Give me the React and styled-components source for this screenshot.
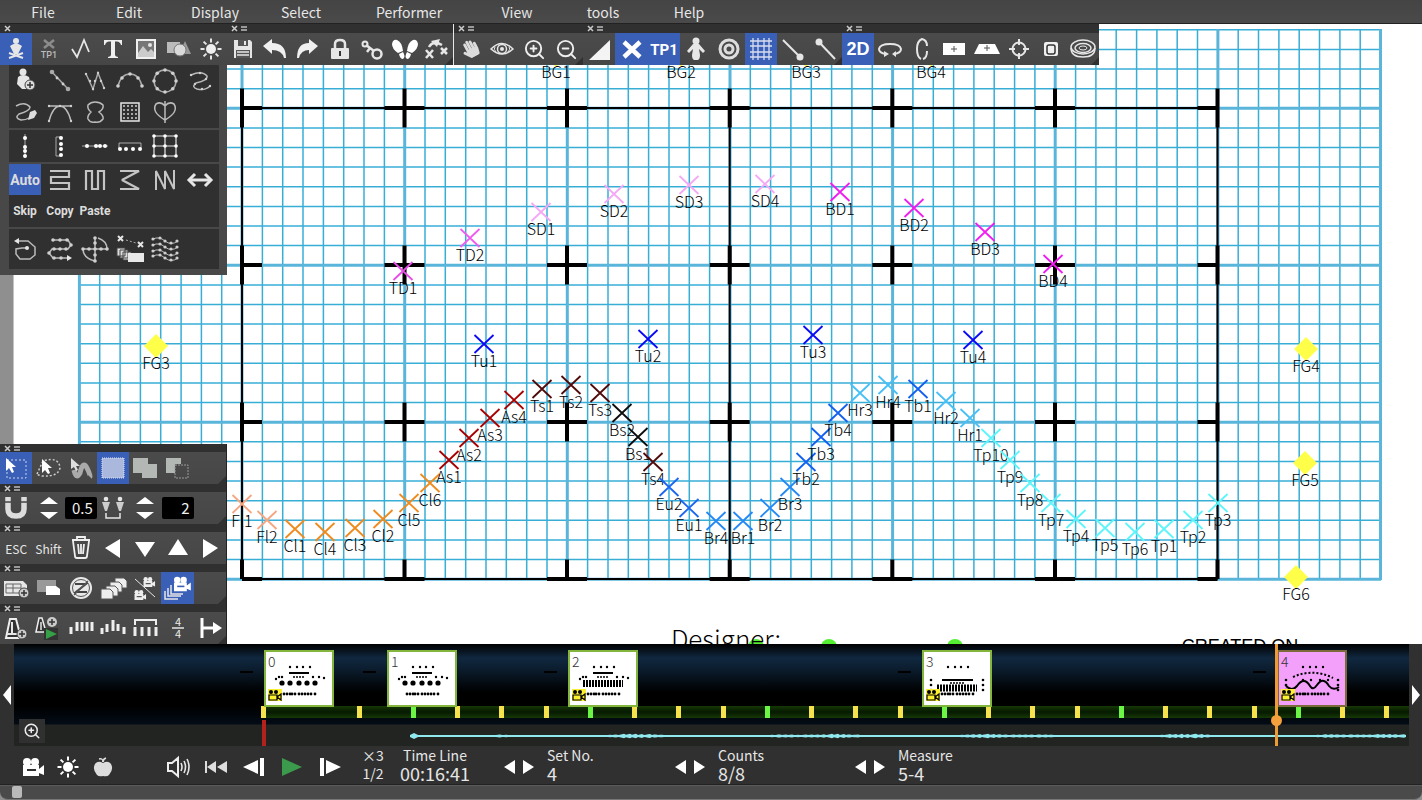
import React from "react";
import styled, { createGlobalStyle, css } from "styled-components";
import { ZoomIn, ZoomOut } from "lucide-react";
import { FaHandPaper } from "react-icons/fa";

const c = {
  panel: "#484848",
  dark: "#303030",
  blue: "#3a5fb7",
  ink: "#e6e6e6",
  dim: "#bdbdbd",
  grid: "#38aed7",
  gridMajor: "#5ab5da",
};
const sans = `"Noto Sans CJK JP", "Noto Sans", sans-serif`;

const GlobalStyle = createGlobalStyle`
  *, *::before, *::after { box-sizing: border-box; }
  body { margin: 0; background: #8f8f8f; font-family: ${sans}; color: ${c.ink}; }
  button, input { font-family: inherit; }
`;

/* ---------- layout ---------- */

const Shell = styled.div`
  display: flex;
  flex-direction: column;
  min-height: 100vh;
  overflow: hidden;
`;

const MenuBar = styled.nav`
  display: flex;
  height: 24px;
  background: linear-gradient(#444, #4a4a4a);
  border-bottom: 1px solid #222;
`;

const MenuItem = styled.button`
  width: ${(p) => (p.$wide ? 130 : 86)}px;
  padding: 0;
  border: 0;
  background: none;
  color: ${c.ink};
  font-size: 14px;
  line-height: 24px;
`;

const Workspace = styled.main`
  position: relative;
  flex: 1 0 620px;
  overflow: hidden;
  background: #fff;
`;

const Ruler = styled.div`
  position: absolute;
  inset: 0 auto 0 0;
  width: 14px;
  background: #8f8f8f;
  border-right: 1px solid #c4c4c4;
`;

const FieldSvg = styled.svg`
  position: absolute;
  top: 0;
  left: 0;
  width: 1422px;
  height: 620px;
  text {
    font-family: ${sans};
    font-weight: 300;
    font-size: 16px;
    text-anchor: middle;
    fill: #000;
  }
  text.designer { font-size: 26px; }
  text.stamp { font-family: "Liberation Sans", sans-serif; font-weight: 400; font-size: 18px; }
`;

const TopDock = styled.div`
  position: absolute;
  top: 0;
  left: 0;
  display: flex;
`;

const SideDock = styled.div`
  position: absolute;
  top: 41px;
  left: 0;
  width: 227px;
`;

const BottomDock = styled.div`
  position: absolute;
  bottom: 0;
  left: 0;
  width: 227px;
  border-right: 1px solid #222;
`;

const Toolbar = styled.section`
  width: ${(p) => (p.$width ? `${p.$width}px` : "auto")};
  background: ${c.panel};
  ${(p) => p.$ruled && css`border-left: 1px solid #e8e8e8;`}
`;

const Handle = styled.header`
  display: flex;
  gap: 5px;
  height: ${(p) => p.$height}px;
  padding-left: 4px;
  background: ${c.dark};
  svg { display: block; height: 8px; }
`;

const Tools = styled.div`
  position: relative;
  display: flex;
  height: 32px;
  background: linear-gradient(#4b4b4b, #464646);
  &::after {
    content: "";
    position: absolute;
    right: 0;
    bottom: 0;
    border: 4px solid;
    border-color: transparent ${c.dark} ${c.dark} transparent;
    display: ${(p) => (p.$grip ? "block" : "none")};
  }
`;

const ToolButton = styled.button`
  display: flex;
  flex: 1 1 0;
  align-items: center;
  justify-content: center;
  min-width: 0;
  height: 100%;
  padding: 0;
  border: 0;
  color: ${c.ink};
  font-size: 12px;
  background: ${(p) => (p.$on ? c.blue : "none")};
`;

const Glyph = styled.svg`
  flex: none;
  width: 32px;
  height: 32px;
  overflow: visible;
  fill: none;
  stroke: none;
`;

const Stepper = styled.div`
  display: flex;
  flex: 1 1 0;
  flex-direction: column;
  align-items: center;
  justify-content: center;
`;

const StepButton = styled.button`
  display: flex;
  justify-content: center;
  width: 20px;
  height: 12px;
  padding: 0;
  border: 0;
  background: none;
`;

const NumberBox = styled.input`
  flex: none;
  align-self: center;
  width: 32px;
  height: 22px;
  padding: 0 4px 0 0;
  border: 0;
  border-radius: 2px;
  background: #000;
  color: #f0f0f0;
  font-size: 15px;
  line-height: 22px;
  text-align: right;
`;

const Palette = styled.section`
  display: flex;
  flex-direction: column;
  gap: 2px;
  height: 210px;
  padding: 0 8px 6px 9px;
  background: ${c.panel};
`;

const PaletteGroup = styled.div`
  display: grid;
  grid-template-columns: repeat(6, 35px);
  grid-auto-rows: 31px;
  align-content: ${(p) => (p.$center ? "center" : "start")};
  height: ${(p) => p.$height}px;
  background: ${c.dark};
  overflow: hidden;
  ${ToolButton} { width: 32px; }
`;

/* ---------- timeline ---------- */

const Timeline = styled.section`
  display: flex;
  height: 102px;
  background: ${c.dark};
`;

const PageButton = styled.button`
  display: flex;
  align-items: center;
  justify-content: center;
  width: ${(p) => p.$width}px;
  padding: 0;
  border: 0;
  background: none;
`;

const Track = styled.div`
  position: relative;
  flex: 1;
  overflow: hidden;
  background: linear-gradient(#000 0, #10283f 14px, #0c1e30 24px, #000 48px, #000 62px, #030c16 80px, #222422 81px);
`;

const BeatStrip = styled.div`
  position: absolute;
  top: 62px;
  left: 249px;
  right: 0;
  height: 12px;
  background: linear-gradient(#163806, #061a00, #163806);
`;

const Beat = styled.span`
  position: absolute;
  top: 62px;
  width: 5px;
  height: 12px;
  background: ${(p) => (p.$green ? "#6cf545" : "#f7e14c")};
`;

const Dash = styled.span`
  position: absolute;
  top: 27px;
  width: 13px;
  height: 2px;
  background: #000;
`;

const SetCard = styled.button`
  position: absolute;
  top: 6px;
  width: 70px;
  height: 57px;
  padding: 0;
  border: 2px solid ${(p) => (p.$current ? "#7d6a3c" : "#84b53c")};
  background: ${(p) => (p.$current ? "#f2a0fa" : "#fff")};
  svg { display: block; }
  text { font: 300 14px ${sans}; fill: #333; }
`;

const Wave = styled.svg`
  position: absolute;
  left: 396px;
  top: 84px;
  width: 1000px;
  height: 16px;
`;

const StartMark = styled.span`
  position: absolute;
  left: 248px;
  top: 76px;
  width: 4px;
  height: 26px;
  background: #b3211c;
`;

const ZoomButton = styled.button`
  position: absolute;
  left: 5px;
  top: 75px;
  display: flex;
  align-items: center;
  justify-content: center;
  width: 26px;
  height: 24px;
  padding: 0;
  border: 0;
  background: ${c.dark};
`;

const Playhead = styled.span`
  position: absolute;
  left: 1261px;
  top: 0;
  width: 3px;
  height: 102px;
  background: #f09a36;
  &::after {
    content: "";
    position: absolute;
    left: -4px;
    top: 71px;
    width: 11px;
    height: 11px;
    border-radius: 50%;
    background: #f4a03c;
  }
`;

/* ---------- transport ---------- */

const Transport = styled.footer`
  display: flex;
  align-items: center;
  height: 39px;
  padding-left: 15px;
  background: ${c.dark};
  border-bottom: 1px solid #222;
`;

const Cluster = styled.div`
  display: flex;
  padding-top: 3px;
  margin-right: ${(p) => p.$after || 0}px;
`;

const PlayButton = styled.button`
  display: flex;
  align-items: center;
  justify-content: center;
  width: ${(p) => p.$width}px;
  height: 32px;
  padding: 0;
  border: 0;
  background: none;
`;

const Readout = styled.div`
  display: flex;
  flex-direction: column;
  width: ${(p) => p.$width}px;
  margin-right: ${(p) => p.$after || 0}px;
  padding-bottom: 2px;
  text-align: ${(p) => (p.$center ? "center" : "left")};
`;

const Caption = styled.span`
  font-size: 14px;
  line-height: 18px;
`;

const Value = styled.span`
  font-size: 18px;
  line-height: 18px;
`;

const Counter = styled.div`
  display: flex;
  align-items: center;
  gap: 9px;
  width: ${(p) => p.$width}px;
`;

const ScrollTrack = styled.div`
  height: 15px;
  padding-left: 12px;
  background: #4a4a4a;
  border-top: 1px solid #5a5a5a;
  border-bottom: 1px solid #777;
  border-radius: 0 0 8px 8px;
`;

const ScrollThumb = styled.div`
  width: 10px;
  height: 12px;
  border-radius: 2px;
  background: #b9b9b9;
`;

/* ---------- icons, drawn around 0,0 ---------- */

const G = ({ children }) => (
  <Glyph viewBox="-16 -16 32 32" aria-hidden="true">{children}</Glyph>
);
const L = ({ d, w = 1.5, s = c.ink, ...r }) => <path d={d} stroke={s} strokeWidth={w} {...r} />;
const F = ({ d, f = c.ink, ...r }) => <path d={d} fill={f} {...r} />;
const O = ({ x = 0, y = 0, r = 1.5, f = c.ink }) => <circle cx={x} cy={y} r={r} fill={f} />;
const Dots = ({ at, r = 1.4, f = "#cfcfcf" }) => at.map(([x, y], i) => <O key={i} x={x} y={y} r={r} f={f} />);

const rays = Array.from({ length: 8 }, (_, i) => {
  const a = (i * Math.PI) / 4;
  const p = (r) => `${(Math.cos(a) * r).toFixed(1)} ${(Math.sin(a) * r).toFixed(1)}`;
  return `M${p(6.5)}L${p(10.5)}`;
}).join("");
const ring = Array.from({ length: 8 }, (_, i) => [
  Math.cos((i * Math.PI) / 4) * 11,
  Math.sin((i * Math.PI) / 4) * 11,
]);

const CameraShape = ({ f = "#fff", hole = c.dark }) => (
  <>
    <O x={-6} y={-5} r={4} f={f} />
    <O x={2} y={-5} r={4} f={f} />
    <F f={f} d="M-10-2H6V9H-10zM6 2l5-4V8L6 6z" />
    <F f={hole} d="M-6 2H3V4H-6z" />
  </>
);

const I = {
  performer: <G><L d="M-7 4L7 9M7 4L-7 9" w={2} /><O y={-8} r={3} /><F d="M-6-3Q0-8 6-3L2 5H-2z" /></G>,
  labelOff: <G><L d="M-5-9L5-1M5-9L-5-1" w={2.5} s="#8c8c8c" /><text y="9" textAnchor="middle" fontSize="9" fontWeight="500" fill="#bbb" fontFamily="Roboto, sans-serif">TP1</text></G>,
  poly: <G><L d="M-9 0L-4 8L3-9L8 3" w={1.8} /></G>,
  text: <G><F d="M-9-9H9V-4H8Q7-7.500 4-7.500H2V6Q2 7.500 5 8V9H-5V8Q-2 7.500-2 6V-7.500H-4Q-7-7.500-8-4H-9z" f="#f0f0f0" /></G>,
  image: <G><path d="M-9-9H9V9H-9z" fill="#777" stroke="#f0f0f0" strokeWidth="2" /><F d="M-8 8V4L-3-3L2 3L5 0L8 3V8z" f="#ccc" /><O x={4} y={-4} r={2} /></G>,
  shapes: <G><F d="M-11-7H2V4H-11z" f="#bbb" /><F d="M7-8L13 5H1z" f="#999" /><circle cx="2" cy="1" r="6" fill="#dadada" stroke="#777" /></G>,
  sun: <G><O r={5} f="#eee" /><L d={rays} w={2} /></G>,
  save: <G><F d="M-9-9H7L9-7V9H-9z" /><F d="M-5-9H5V-3H-5zM-7 1H7V9H-7z" f="#555" /><F d="M1-8H3V-4H1z" /><L d="M-6 3H6M-6 6H6" w={1.5} /></G>,
  undo: <G><F d="M-12-3L-3-10V-6Q11-6 11 9H9Q7 1-3 1V5z" f="#f0f0f0" /></G>,
  redo: <G><F d="M10-3L1-10V-6Q-11-6-11 9H-9Q-7 1 1 1V5z" f="#f0f0f0" /></G>,
  lock: <G><L d="M-5 0V-5Q-5-9 0-9T5-5V0" w={2.5} /><rect x="-9" y="-1" width="18" height="11" rx="1" fill={c.ink} /><F d="M-1 2H1V7H-1z" f="#333" /></G>,
  key: <G><circle cx="5" cy="5" r="4.500" stroke={c.ink} strokeWidth="2.500" /><L d="M2 2L-6-4M-2-1L-5 3" w={2.5} /><circle cx="-7" cy="-5" r="2.500" stroke={c.ink} strokeWidth="2" /></G>,
  feet: <G>{[1, -1].map((k) => <F key={k} transform={`scale(${k} 1)`} d="M-13-5Q-12-10-8-9Q-3-7-2 2L-7 4Q-13 0-13-5zM-6 5L-2 3Q1 8-2 10Q-5 10-6 5z" f="#fff" />)}</G>,
  route: <G><L d="M-11 1L-4 9M-4 1L-11 9M4-1L10 5M10-1L4 5" w={2.5} /><L d="M-8-2Q-4-9 5-4" w={2.5} /><F d="M-6-8L3-10L0-2z" /></G>,
  hand: <G><g transform="rotate(-28) translate(-9 -9)"><FaHandPaper size={18} color="#dcdcdc" /></g></G>,
  eye: <G><L d="M-11 0Q0-11 11 0Q0 10-11 0z" w={1.5} /><circle r="4.500" stroke={c.ink} strokeWidth="1.500" /><O r={2} /><L d="M-7-2Q-9 0-6 3M7-2Q9 0 6 3" w={1} /></G>,
  zoomIn: <ZoomIn size={23} color="#eee" strokeWidth={2} />,
  zoomOut: <ZoomOut size={23} color="#eee" strokeWidth={2} />,
  wedge: <G><F d="M-10 11H11V-9z" f="#f4f4f4" /></G>,
  cross: <G><L d="M-8-7L8 8M8-7L-8 8" w={4.5} s="#fff" /></G>,
  tp1: <G><text y="6" textAnchor="middle" fontSize="15" fontWeight="700" fill="#fff" fontFamily="Roboto, sans-serif">TP1</text></G>,
  person: <G><O y={-8} r={3.5} /><F d="M-3-5H3L9 2L7 4L3 0L4 6Q4 10 2 11H-2Q-4 10-4 6L-3 0L-7 4L-9 2z" /></G>,
  target: <G><circle r="9" stroke="#ddd" strokeWidth="3" /><circle r="4" stroke="#ddd" strokeWidth="3" /></G>,
  grid: <G><L d="M-8-11V11M-3-11V11M3-11V11M8-11V11M-11-8H11M-11-3H11M-11 3H11M-11 8H11" w={1.3} s="#d8def0" /></G>,
  lineEnd: <G><L d="M-10-9L7 8" w={2} /><O x={7} y={8} r={3.5} /></G>,
  lineStart: <G><L d="M-7-7L9 10" w={2} /><O x={-7} y={-7} r={3.5} /></G>,
  twoD: <G><text y="6" textAnchor="middle" fontSize="18" fontWeight="700" fill="#fff" fontFamily="Liberation Sans, sans-serif">2D</text></G>,
  spinH: <G><L d="M-4 5Q-11 4-11 0Q-10-5 0-5T11 0Q11 4 4 5" w={2} /><F d="M-6 2L-1 5L-6 8zM6 2L2 5L6 8z" /></G>,
  spinV: <G><L d="M-1 10Q-5 8-5 0T0-10Q5-9 5-3M5 2Q5 9 1 10" w={2} /></G>,
  plane: <G><F d="M-11-6H11V6H-11z" f="#fff" /><L d="M0-3V3M-3 0H3" s="#555" w={1} /></G>,
  tilt: <G><F d="M-8-5H8L13 5H-13z" f="#fff" /><L d="M0-4V2M-3-1H3" s="#555" w={1} /></G>,
  aim: <G><circle r="6.500" stroke={c.ink} strokeWidth="2" /><L d="M0-10V-4M0 10V4M-10 0H-4M10 0H4" w={2} /></G>,
  frame: <G><rect x="-7" y="-7" width="14" height="14" rx="2" fill="#f0f0f0" /><rect x="-4" y="-4" width="8" height="9" rx="2" stroke="#333" strokeWidth="1.500" /></G>,
  stadium: <G><ellipse cy="-2" rx="12" ry="7" stroke={c.ink} strokeWidth="1.500" /><ellipse cy="-1" rx="8" ry="4.500" stroke={c.ink} strokeWidth="1.500" /><ellipse cy="-1" rx="4" ry="2" stroke={c.ink} /><L d="M-12-1Q-12 8 0 8T12-1" /></G>,

  addPerson: <G><O x={-2} y={-9} r={3.5} /><F d="M-7-4Q-2-8 4-4L5 0L2 8H-3L-8 3z" /><circle cx="5" cy="4" r="5" fill="#ddd" stroke="#444" /><L d="M5 1V7M2 4H8" s="#333" w={1.5} /></G>,
  segment: <G><L d="M-8-9L8 8" s="#aaa" /><Dots at={[[-8, -9], [8, 8]]} r={2.3} f="#aaa" /><Dots at={[[-3, -3], [3, 3]]} /></G>,
  zigzag: <G><L d="M-9-7L-2 8L3-8L9 7" s="#aaa" /><Dots at={[[-9, -7], [-5, 0], [-2, 8], [0, 0], [3, -8], [6, 0], [9, 7]]} r={1.2} /></G>,
  arc: <G><L d="M-12 5Q-9-7 0-7T12 5" s="#aaa" /><Dots at={[[-12, 5], [-8, -3], [0, -7], [8, -3], [12, 5]]} r={1.8} /></G>,
  circle: <G><circle r="11" stroke="#aaa" strokeWidth="1.500" /><Dots at={ring} r={1.8} /></G>,
  curve: <G><L d="M-9-6Q2-11 7-5Q8-1-4 2Q-9 6-3 8Q5 10 10 5" s="#bbb" /><Dots at={[[-9, -6], [0, -8], [6, -2], [-5, 3], [2, 8], [10, 5]]} r={1.2} /></G>,
  pen: <G><L d="M-9-6Q0-11 5-5Q5-1-6 2Q-11 6-4 8Q1 8 4 6" s="#bbb" /><F d="M3 8L5 0L10-2L12 1L9 6z" f="#ddd" /></G>,
  bezier: <G><L d="M-11 9Q-7-6 0-6T11 9M-11-6H11" s="#bbb" /><Dots at={[[-11, 9], [-11, -6], [0, -6], [11, -6], [11, 9]]} r={1.2} /></G>,
  closed: <G><L d="M0-10Q5-10 8-7Q9-3 4 0Q9 4 8 7Q5 11 0 10Q-5 11-7 7Q-8 4-4 0Q-8-3-7-7Q-4-10 0-10z" s="#bbb" /></G>,
  block: <G><L d="M-9-9H9V9H-9z" /><Dots at={[-6, -2, 2, 6].flatMap((x) => [-6, -2, 2, 6].map((y) => [x, y]))} r={1} /></G>,
  heart: <G><L d="M0-6Q-4-11-9-8Q-14 0 0 8Q14 0 9-8Q4-11 0-6M0-11V11" s="#bbb" /></G>,
  spreadV: <G><L d="M0-12V12" s="#aaa" w={1} /><Dots at={[[0, -8], [0, 1], [0, 5], [0, 10]]} r={2} f="#fff" /></G>,
  bracketV: <G><L d="M1-9H-4V10H1" s="#aaa" w={1} /><Dots at={[[1, -8], [1, -2], [1, 3], [1, 9]]} r={2} f="#fff" /></G>,
  spreadH: <G><L d="M-13 0H13" s="#aaa" w={1} /><Dots at={[[-8, 0], [1, 0], [5, 0], [10, 0]]} r={2} f="#fff" /></G>,
  bracketH: <G><L d="M-11 3V-3H11V3" s="#aaa" w={1} /><Dots at={[[-10, 3], [-4, 3], [3, 3], [10, 3]]} r={2} f="#fff" /></G>,
  lattice: <G><L d="M-11-10H11V10H-11zM0-10V10M-11 0H11" w={1.2} /><Dots at={[-11, 0, 11].flatMap((x) => [-10, 0, 10].map((y) => [x, y]))} r={1.8} f="#fff" /></G>,
  snakeH: <G><L d="M-10-9H9V-3H-9V3H9V9H-10" w={2.2} s="#c4c4c4" /></G>,
  snakeV: <G><L d="M-9 10V-9H-3V9H3V-9H9V10" w={2.2} s="#c4c4c4" /></G>,
  zedH: <G><L d="M-10-9H9L-8 0L9 9H-10" w={2.2} s="#c4c4c4" strokeLinejoin="bevel" /></G>,
  zedV: <G><L d="M-9 10V-9L0 9V-9L9 9V-10" w={2} s="#c4c4c4" strokeLinejoin="bevel" /></G>,
  both: <G><L d="M-9 0H9" w={3} /><L d="M-5-6L-11 0L-5 6M5-6L11 0L5 6" w={3} /></G>,
  follow: <G><L d="M-9-8H3L10-2V6L5 10H-5L-9 5V0L-3-1H2" s="#bbb" w={1.5} /><F d="M-11-8L-6-11V-5z" /><O x={2} y={-1} r={2} /></G>,
  weave: <G><L d="M-7-9H8L11-4L8 0H-8L-11 4L-7 9H9" s="#bbb" /><Dots at={[[-7, -9], [0, -9], [7, -9], [11, -4], [6, 0], [0, 0], [-6, 0], [-11, 4], [-6, 9], [1, 9]]} r={1.8} /><F d="M7 6L12 9L7 12z" /></G>,
  pivot: <G><L d="M0-12V12M-12 0H12M3-11Q12-8 12 0M-12 0Q-12 9 0 12" s="#bbb" /><Dots at={[[0, -11], [0, -6], [0, 0], [0, 6], [0, 12], [-12, 0], [-6, 0], [6, 0], [12, 0]]} r={1.8} /></G>,
  moveBlock: <G><L d="M-12-13L-7-8M-7-13L-12-8M8-7L13-2M13-7L8-2" w={2} /><L d="M-4-9L6-6" w={1} strokeDasharray="2 2" s="#aaa" /><path d="M-13-1H-5V7H-13zM-10 1H-2V9H-10zM-7 3H1V11H-7z" fill="#ddd" stroke="#444" strokeWidth="1" /><F d="M-2 4H14V13H-2z" f="#e8e8e8" /></G>,
  waves: <G>{[-8, -2, 4, 9].map((y) => <g key={y}><L d={`M-12 ${y - 2}Q-6 ${y - 5} 0 ${y}T13 ${y}`} s="#bbb" w={1} /><Dots at={[[-12, y - 2], [-5, y - 3], [0, y], [6, y + 2], [12, y]]} r={1.6} /></g>)}</G>,

  marquee: <G><path d="M-9-8H10V10H-9z" stroke="#c8d2ee" strokeDasharray="2 2" /><F d="M-10-10V3L-7 0L-4 5L-2 4L-4-1H0z" f="#fff" /></G>,
  lasso: <G><path d="M-11 6L-5-7Q11-12 12 0Q10 9-6 8Q-10 7-11 6" stroke="#ccc" strokeWidth="1.500" strokeDasharray="2 2" /><F d="M-6-9V5L-3 2L0 6L2 5L0 0H4z" f="#fff" /></G>,
  brush: <G><L d="M-7 2Q-5 12-1 5Q2-8 6 0T9 9" w={5} s="#aaa" /><F d="M-10-10V1L-7-1L-5 3L-3 2L-5-2H-1z" f="#ddd" /></G>,
  selNew: <G><rect x="-11" y="-10" width="22" height="20" fill="#aab8de" stroke="#dde4f6" strokeDasharray="1 1" /></G>,
  selAdd: <G><F d="M-12-10H3V-4H12V10H-3V5H-12z" f="#b4b8b4" /></G>,
  selSub: <G><F d="M-12-10H3V-4H-3V5H-12z" f="#b4b8b4" /><path d="M-3-3H10V10H-3z" stroke="#999" strokeDasharray="2 1" /></G>,
  magnet: <G><L d="M-8-11V1Q-8 8 0 8T8 1V-11" w={5.5} s="#ddd" /><L d="M-11-6H-5M5-6H11" s="#444" w={1.5} /></G>,
  pair: <G><O x={-7} y={-9} r={2.3} /><O x={7} y={-9} r={2.3} /><F d="M-11-6H-3L-6 3H-8zM3-6H11L8 3H6z" f="#ccc" /><L d="M-7 5V10H7V5" w={1.5} /></G>,
  trash: <G><L d="M-9-8H9M-4-8V-11H4V-8M-8-7L-6 8Q-6 10-4 10H4Q6 10 6 8L8-7M-3-4L-2 6M3-4L2 6M0-4V6" w={1.8} s="#f0f0f0" /></G>,
  left: <G><F d="M7-9V10L-8 0z" f="#fff" /></G>,
  down: <G><F d="M-10-6H10L0 9z" f="#fff" /></G>,
  up: <G><F d="M-10 7H10L0-9z" f="#fff" /></G>,
  right: <G><F d="M-7-9V10L8 0z" f="#fff" /></G>,
  sheetAdd: <G><F d="M-12-7H7L11-3V8H-12z" /><L d="M-10-4H5V5H-10zM-3-4V5M-10 0H5" s="#666" w={1} /><circle cx="8" cy="5" r="5" fill="#ccc" stroke="#444" /><L d="M8 2V8M5 5H11" s="#333" w={1.5} /></G>,
  sheets: <G><F d="M-11-8H8V4H-11z" f="#999" /><F d="M-2-2H8L12 1V7H-2z" f="#fff" /></G>,
  noZ: <G><O r={11} f="#e8e8e8" /><circle r="8.500" stroke="#555" strokeWidth="1" /><L d="M-6-4H5L-5 4H6" w={2} s="#444" /><L d="M-7 7L7-7" w={1.2} s="#555" /></G>,
  stack: <G>{[[2, -10], [-3, -6], [-7, -2], [-12, 1]].map(([x, y]) => <path key={x} d={`M${x} ${y}h9l3 3v7h-12z`} fill="#eee" stroke="#555" strokeWidth="1" />)}</G>,
  cams: <G><g transform="translate(4 -6) scale(.55)"><CameraShape f="#eee" hole="#444" /></g><g transform="translate(-5 7) scale(.55)"><CameraShape f="#eee" hole="#444" /></g><L d="M-10-9L10 9" w={1} /></G>,
  camStack: <G><L d="M-13 3V11H0M-10 0V8H3M-7-3V6H5" w={1.5} /><g transform="translate(4 -4) scale(.8)"><CameraShape hole={c.blue} /></g></G>,
  metroAdd: <G><path d="M-10 10L-6-9H0L5 10z" fill="#333" stroke="#eee" strokeWidth="2" /><L d="M-4 5V-6M-9 6H3" w={2} /><circle cx="6" cy="6" r="5" fill="#ccc" stroke="#444" /><L d="M6 3V9M3 6H9" s="#333" w={1.5} /></G>,
  metroPlay: <G><path d="M-12 4L-9-10H-6L-2 4z" stroke="#eee" fill="#333" strokeWidth="1.500" /><L d="M-7 2V-6" /><O x={4} y={-6} r={5} f="#ccc" /><L d="M4-9V-3M1-6H7" w={1.5} s="#333" /><F d="M-4 0H10V12H-4z" f="#333" /><F d="M-2 1L9 6L-2 11z" f="#35a046" /></G>,
  bars1: <G><L d="M-10-1V6M-4-6V3M1-6V3M6-6V3M11-6V3" w={3} s="#eee" /></G>,
  bars2: <G><L d="M-11 0V6M-6-4V4M0-8V3M5-4V3M11-1V6" w={3} s="#eee" /></G>,
  bars3: <G><L d="M-10-3V-8H11V-3" w={2} s="#eee" /><L d="M-10-1V8M-3-1V8M4-1V8M11-1V8" w={3} s="#eee" /></G>,
  meter: <G><L d="M-6 0H6" w={1.5} /><text y="-2" textAnchor="middle" fontSize="11" fill="#eee">4</text><text y="10" textAnchor="middle" fontSize="11" fill="#eee">4</text></G>,
  goTo: <G><L d="M-8-10V10M-7 0H6" w={3} s="#fff" /><F d="M3-6L12 0L3 6z" f="#fff" /></G>,

  camera: <G><CameraShape /></G>,
  bigSun: <G><O r={5} f="#fff" /><L d={rays} w={2} s="#fff" /></G>,
  apple: <G><F d="M0-4Q5-7 8-3Q11 2 6 8Q4 10 0 9Q-4 10-6 8Q-11 2-8-3Q-5-7 0-4z" f="#dcdcdc" /><L d="M0-5Q0-8 3-9" w={1.8} s="#dcdcdc" /><L d="M-4-8Q0-9 0-5" w={1.4} s="#dcdcdc" /></G>,
  speaker: <G><path d="M-10-4H-6L0-9V9L-6 4H-10z" stroke="#eee" strokeWidth="2" /><L d="M3-4Q5 0 3 4M6-6Q9 0 6 6M9-8Q13 0 9 8" w={1.6} /></G>,
  rewind: <G><F d="M-11-6H-9V6H-11zM0-6V6L-9 0zM11-6V6L1 0z" f="#ddd" /></G>,
  prev: <G><F d="M4-7V7L-11 0zM6-9H10V9H6z" f="#fff" /></G>,
  play: <G><F d="M-10-9V9L10 0z" f="#3c9a4c" /></G>,
  next: <G><F d="M-4-7V7L11 0zM-10-9H-6V9H-10z" f="#fff" /></G>,
};

/* ---------- data ---------- */

const menus = ["File", "Edit", "Display", "Select", "Performer", "View", "tools", "Help"];

const topBars = [
  { name: "Objects", width: 227, short: true, items: [["performer", 1], ["labelOff"], ["poly"], ["text"], ["image"], ["shapes"], ["sun"]] },
  { name: "Edit", width: 226, grip: true, items: [["save"], ["undo"], ["redo"], ["lock"], ["key"], ["feet"], ["route"]] },
  { name: "View", width: 130, ruled: true, grip: true, items: [["hand"], ["eye"], ["zoomIn"], ["zoomOut"]] },
  { name: "Display", width: 259, grip: true, items: [["wedge"], ["cross", 1], ["tp1", 1], ["person"], ["target"], ["grid", 1], ["lineEnd"], ["lineStart"]] },
  { name: "Camera", width: 257, grip: true, items: [["twoD", 1], ["spinH"], ["spinV"], ["plane"], ["tilt"], ["aim"], ["frame"], ["stadium"]] },
];

const paletteTop = [
  { height: 63, items: ["addPerson", "segment", "zigzag", "arc", "circle", "curve", "pen", "bezier", "closed", "block", "heart"] },
  { height: 32, items: ["spreadV", "bracketV", "spreadH", "bracketH", "lattice"] },
];
const paletteEnd = ["follow", "weave", "pivot", "moveBlock", "waves"];

const PaletteWord = styled.span`
  font-family: Roboto, sans-serif;
  font-weight: 700;
  font-size: ${(p) => (p.$big ? 14 : 12)}px;
  color: #dcdcdc;
`;

const marks = [
  ["TD1", 403, 271, "#e84be8"], ["TD2", 470, 238, "#f05cf0"], ["SD1", 541, 212, "#f5a8f5"], ["SD2", 614, 194, "#f5a8f5"],
  ["SD3", 689, 185, "#f5a8f5"], ["SD4", 765, 184, "#f5a8f5"], ["BD1", 840, 192, "#f01cf0"], ["BD2", 914, 208, "#f01cf0"],
  ["BD3", 985, 232, "#f01cf0"], ["BD4", 1053, 264, "#f01cf0"],
  ["Tu1", 484, 344, "#0a0af5"], ["Tu2", 648, 339, "#0a0af5"], ["Tu3", 813, 335, "#0a0af5"], ["Tu4", 973, 340, "#0a0af5"],
  ["Fl1", 242, 504, "#f5a680"], ["Fl2", 267, 520, "#f5a680"], ["Cl1", 295, 529, "#f08a1c"], ["Cl4", 325, 532, "#f08a1c"],
  ["Cl3", 355, 528, "#f08a1c"], ["Cl2", 383, 519, "#f08a1c"], ["Cl5", 409, 503, "#f08a1c"], ["Cl6", 430, 483, "#f08a1c"],
  ["As1", 449, 460, "#a80000"], ["As2", 469, 438, "#a80000"], ["As3", 490, 418, "#a80000"], ["As4", 514, 400, "#a80000"],
  ["Ts1", 542, 389, "#500a0a"], ["Ts2", 571, 385, "#500a0a"], ["Ts3", 600, 393, "#500a0a"], ["Bs2", 622, 413, "#0c0c0c"],
  ["Bs1", 638, 437, "#0c0c0c"], ["Ts4", 653, 462, "#500a0a"], ["Eu2", 669, 487, "#1c66f0"], ["Eu1", 689, 508, "#1c66f0"],
  ["Br4", 716, 521, "#2488f5"], ["Br1", 743, 521, "#2488f5"], ["Br2", 770, 508, "#2488f5"], ["Br3", 790, 487, "#2488f5"],
  ["Tb2", 806, 462, "#1260f0"], ["Tb3", 821, 437, "#1260f0"], ["Tb4", 838, 413, "#1260f0"], ["Hr3", 860, 393, "#48bff5"],
  ["Hr4", 888, 385, "#48bff5"], ["Tb1", 918, 389, "#1260f0"], ["Hr2", 946, 401, "#48bff5"], ["Hr1", 970, 418, "#48bff5"],
  ["Tp10", 991, 438, "#5cf5fa"], ["Tp9", 1010, 460, "#5cf5fa"], ["Tp8", 1030, 483, "#5cf5fa"], ["Tp7", 1051, 503, "#5cf5fa"],
  ["Tp4", 1076, 519, "#5cf5fa"], ["Tp5", 1105, 528, "#5cf5fa"], ["Tp6", 1135, 532, "#5cf5fa"], ["Tp1", 1164, 529, "#5cf5fa"],
  ["Tp2", 1193, 520, "#5cf5fa"], ["Tp3", 1218, 503, "#5cf5fa"],
];

const guards = [["BG1", 556, 55], ["BG2", 681, 55], ["BG3", 806, 55], ["BG4", 931, 55], ["FG3", 156, 346], ["FG4", 1306, 349], ["FG5", 1305, 463], ["FG6", 1296, 577]];

const yards = [242, 404.5, 567, 729.7, 892.3, 1055, 1217.5];
const hashes = [108, 265, 422, 579];

function gridPaths() {
  let minor = "";
  let major = "";
  for (let i = 0; i <= 64; i++) {
    const x = (79.4 + i * 20.33).toFixed(1);
    if (i % 8 === 0) major += `M${x} 29V580`;
    else minor += `M${x} 29V580`;
  }
  for (let j = 0; j <= 28; j++) {
    const y = (29.8 + j * 19.62).toFixed(1);
    if (j % 8 === 4) major += `M79 ${y}H1381`;
    else minor += `M79 ${y}H1381`;
  }
  return [minor, major];
}
const [minorGrid, majorGrid] = gridPaths();

const hashPath = yards
  .flatMap((x, i) =>
    hashes.map((y, j) => {
      const l = i === 0 ? x : x - 20;
      const r = i === yards.length - 1 ? x : x + 20;
      return `M${l} ${y}H${r}M${x} ${y - 19.5}V${j === 3 ? y : y + 19.5}`;
    })
  )
  .join("");

function Field() {
  return (
    <FieldSvg viewBox="0 24 1422 620" role="img" aria-label="Drill chart">
      <path d={minorGrid} stroke={c.grid} strokeWidth="1.500" />
      <path d={majorGrid} stroke={c.gridMajor} strokeWidth="3" />
      <path d="M242 108H1217.500M242 579H1217.500M242 90V579M729.700 90V579M1217.500 90V579" stroke="#000" strokeWidth="2" />
      <path d={hashPath} stroke="#000" strokeWidth="4" />
      {guards.map(([n, x, y]) => (
        <g key={n}>
          <path d={`M${x - 12} ${y}L${x} ${y - 12}L${x + 12} ${y}L${x} ${y + 12}z`} fill="#ffff4a" />
          <text x={x} y={y + 23}>{n}</text>
        </g>
      ))}
      {marks.map(([n, x, y, col]) => (
        <g key={n}>
          <path d={`M${x - 9.5} ${y - 9}l19 18m0-18l-19 18`} stroke={col} strokeWidth="1.800" fill="none" />
          <text x={x} y={y + 23}>{n}</text>
        </g>
      ))}
      {[756, 829, 955].map((x) => <circle key={x} cx={x} cy="647" r="8" fill="#55ef32" />)}
      <text className="designer" x="726" y="649">Designer:</text>
      <text className="stamp" x="1240" y="652">CREATED ON</text>
    </FieldSvg>
  );
}

/* miniature of each set: dots are [x, y, radius] */
const row = (y, xs, r = 1.2) => xs.map((x) => [x, y, r]);
const topRow = row(15, [24, 31, 37, 44], 1.2);
const bottomRow = row(42, [18, 21, 24, 26, 29, 33, 36, 39, 42, 45, 49], 1.4);
const sides = [[10, 27], [13, 25], [16, 25], [47, 25], [53, 25], [58, 26]].map(([x, y]) => [x, y, 1.2]);
const flanks = [28, 33, 38].flatMap((y) => [[7, y, 1.3], [59, y, 1.3]]);

const sets = [
  { n: 0, left: 250, camera: true, dots: [...topRow, ...bottomRow, ...sides, ...row(25, [28, 31, 34, 37], 1), ...row(31, [16, 24, 33, 41, 49], 2.6)], line: "M23 21H43" },
  { n: 1, left: 373, dots: [...topRow, ...bottomRow, ...sides, ...row(25, [28, 31, 34, 37], 1), ...row(31, [16, 24, 33, 41, 49], 2.6)], line: "M23 21H43" },
  { n: 2, left: 554, camera: true, dots: [...topRow, ...bottomRow, ...sides, ...row(25, [28, 31, 34, 37], 1)], line: "M23 21H43", block: 31.5 },
  { n: 3, left: 908, camera: true, dots: [...topRow, ...bottomRow, ...flanks, ...row(31, [27, 30, 33, 36, 39], 1)], line: "M18 28H49", block: 36 },
  { n: 4, left: 1263, camera: true, current: true, dots: [...topRow, ...bottomRow, ...flanks, ...row(28, [24, 32, 41, 49], 1.2)], arc: "M14 25Q34 16 54 26", wave: "M7 34Q13 40 18 34Q25 24 31 34Q34 39 38 33Q44 24 50 34Q54 39 60 35" },
];

function SetThumb({ n, left, camera, current, dots, line, block, arc, wave }) {
  return (
    <SetCard style={{ left }} $current={current} aria-label={`Set ${n}`}>
      <svg width="66" height="53" viewBox="0 0 66 53">
        {dots.map(([x, y, r], i) => <circle key={i} cx={x} cy={y} r={r} fill="#000" />)}
        {line && <path d={line} stroke="#000" strokeWidth="2" />}
        {block && <path d={`M13 ${block}H53`} stroke="#000" strokeWidth="7" strokeDasharray="2 1" />}
        {arc && <path d={arc} stroke="#000" strokeWidth="2" strokeDasharray="2 2" fill="none" />}
        {wave && <path d={wave} stroke="#000" strokeWidth="2" fill="none" />}
        {camera && (
          <g>
            <path d="M2 37H16V49H2z" fill="#fdf030" />
            <circle cx="5" cy="40" r="2" /><circle cx="10" cy="40" r="2" />
            <path d="M3 43H11V48H3zM11 45L15 42V48z" fill="#fdf030" stroke="#000" strokeWidth="1.200" />
          </g>
        )}
        <text x="2" y="15">{n}</text>
      </svg>
    </SetCard>
  );
}

const beats = [
  { x: 247, green: false },
  { x: 343, green: false },
  ...Array.from({ length: 23 }, (_, k) => ({ x: Math.round(397 + k * 44.24), green: k % 4 === 0 })),
];

const wavePath = (() => {
  const top = [];
  const bottom = [];
  for (let x = 0; x <= 996; x += 2) {
    const env = x < 10 ? 3 - Math.abs(x - 4) * 0.5 : 0.9;
    const swell = Math.max(0, Math.sin(x / 29) + 0.5 * Math.sin(x / 11));
    const jitter = x < 88 ? 0 : (((x * 7919) % 13) / 13) * (0.2 + swell);
    const a = env + jitter;
    top.push(`${x} ${(8 - a).toFixed(1)}`);
    bottom.unshift(`${x} ${(8 + a).toFixed(1)}`);
  }
  return `M${top.join("L")}L${bottom.join("L")}z`;
})();

/* ---------- parts ---------- */

const Grab = ({ short, height = 8 }) => (
  <Handle $height={height}>
    <svg width="16" height="8" viewBox="0 0 16 8" aria-hidden="true">
      <path d="M1 2L6 7M6 2L1 7" stroke="#ccc" strokeWidth="1.500" />
      {!short && <path d="M10 3H16M10 6H16" stroke="#bbb" strokeWidth="1.300" />}
    </svg>
  </Handle>
);

const Tool = ({ id, on }) => (
  <ToolButton $on={!!on} aria-label={id}>{I[id]}</ToolButton>
);

const Steps = ({ label }) => (
  <Stepper>
    <StepButton aria-label={`${label} up`}><svg width="18" height="12"><path d="M0 8L9 1L18 8z" fill="#fff" /></svg></StepButton>
    <StepButton aria-label={`${label} down`}><svg width="18" height="12"><path d="M0 4L9 11L18 4z" fill="#fff" /></svg></StepButton>
  </Stepper>
);

const Arrows = ({ label }) => (
  <Cluster>
    <PlayButton $width={19} aria-label={`Previous ${label}`}><svg width="11" height="14"><path d="M11 0V14L0 7z" fill="#fff" /></svg></PlayButton>
    <PlayButton $width={19} aria-label={`Next ${label}`}><svg width="11" height="14"><path d="M0 0V14L11 7z" fill="#fff" /></svg></PlayButton>
  </Cluster>
);

const counters = [
  { label: "Set No.", value: "4", width: 171 },
  { label: "Counts", value: "8/8", width: 180 },
  { label: "Measure", value: "5-4", width: 160 },
];

export default function App() {
  return (
    <Shell>
      <GlobalStyle />
      <MenuBar>
        {menus.map((m) => <MenuItem key={m} $wide={m === "Performer"}>{m}</MenuItem>)}
      </MenuBar>

      <Workspace>
        <Field />
        <Ruler />
        <TopDock>
          {topBars.map((b) => (
            <Toolbar key={b.name} $width={b.width} $ruled={b.ruled} aria-label={b.name}>
              <Grab height={9} short={b.short} />
              <Tools $grip={b.grip}>
                {b.items.map(([id, on]) => <Tool key={id} id={id} on={on} />)}
              </Tools>
            </Toolbar>
          ))}
        </TopDock>

        <SideDock>
          <Palette aria-label="Shape tools">
            {paletteTop.map((g) => (
              <PaletteGroup key={g.height} $height={g.height}>
                {g.items.map((id) => <Tool key={id} id={id} />)}
              </PaletteGroup>
            ))}
            <PaletteGroup $height={63}>
              <ToolButton $on><PaletteWord $big>Auto</PaletteWord></ToolButton>
              {["snakeH", "snakeV", "zedH", "zedV", "both"].map((id) => <Tool key={id} id={id} />)}
              {["Skip", "Copy", "Paste"].map((w) => (
                <ToolButton key={w}><PaletteWord>{w}</PaletteWord></ToolButton>
              ))}
            </PaletteGroup>
            <PaletteGroup $height={40} $center>
              {paletteEnd.map((id) => <Tool key={id} id={id} />)}
            </PaletteGroup>
          </Palette>
        </SideDock>

        <BottomDock>
          <Toolbar aria-label="Selection">
            <Grab />
            <Tools $grip>
              <Tool id="marquee" on /><Tool id="lasso" /><Tool id="brush" /><Tool id="selNew" on />
              <Tool id="selAdd" /><Tool id="selSub" /><Stepper />
            </Tools>
          </Toolbar>
          <Toolbar aria-label="Snapping">
            <Grab />
            <Tools $grip>
              <Tool id="magnet" />
              <Steps label="Snap" />
              <NumberBox aria-label="Snap steps" defaultValue="0.5" />
              <Tool id="pair" />
              <Steps label="Interval" />
              <NumberBox aria-label="Interval" defaultValue="2" />
              <Stepper />
            </Tools>
          </Toolbar>
          <Toolbar aria-label="Keys">
            <Grab />
            <Tools>
              <ToolButton>ESC</ToolButton><ToolButton>Shift</ToolButton>
              {["trash", "left", "down", "up", "right"].map((id) => <Tool key={id} id={id} />)}
            </Tools>
          </Toolbar>
          <Toolbar aria-label="Pages">
            <Grab />
            <Tools $grip>
              {["sheetAdd", "sheets", "noZ", "stack", "cams"].map((id) => <Tool key={id} id={id} />)}
              <Tool id="camStack" on /><Stepper />
            </Tools>
          </Toolbar>
          <Toolbar aria-label="Tempo">
            <Grab />
            <Tools $grip>
              {["metroAdd", "metroPlay", "bars1", "bars2", "bars3", "meter", "goTo"].map((id) => <Tool key={id} id={id} />)}
            </Tools>
          </Toolbar>
        </BottomDock>
      </Workspace>

      <Timeline>
        <PageButton $width={14} aria-label="Earlier"><svg width="8" height="20"><path d="M8 0V20L0 10z" fill="#fff" /></svg></PageButton>
        <Track>
          <BeatStrip />
          {beats.map((b) => <Beat key={b.x} $green={b.green} style={{ left: b.x }} />)}
          {sets.map((s) => <Dash key={s.n} style={{ left: s.left - 24 }} />)}
          {sets.map((s) => <SetThumb key={s.n} {...s} />)}
          <Wave viewBox="0 0 1000 16" aria-hidden="true"><path d={wavePath} fill="#8fe9ee" /></Wave>
          <StartMark />
          <ZoomButton aria-label="Zoom timeline"><ZoomIn size={18} color="#eee" strokeWidth={2} /></ZoomButton>
          <Playhead />
        </Track>
        <PageButton $width={13} aria-label="Later"><svg width="8" height="20"><path d="M0 0V20L8 10z" fill="#fff" /></svg></PageButton>
      </Timeline>

      <Transport>
        <Cluster $after={39}>
          {["camera", "bigSun", "apple"].map((id) => <PlayButton key={id} $width={35} aria-label={id}>{I[id]}</PlayButton>)}
        </Cluster>
        <Cluster>
          {["speaker", "rewind", "prev", "play", "next"].map((id) => <PlayButton key={id} $width={38} aria-label={id}>{I[id]}</PlayButton>)}
        </Cluster>
        <Readout $width={48} $center><Caption>×3</Caption><Caption>1/2</Caption></Readout>
        <Readout $width={76} $after={27} $center><Caption>Time Line</Caption><Value>00:16:41</Value></Readout>
        {counters.map((k) => (
          <Counter key={k.label} $width={k.width}>
            <Arrows label={k.label} />
            <Readout><Caption>{k.label}</Caption><Value>{k.value}</Value></Readout>
          </Counter>
        ))}
      </Transport>

      <ScrollTrack><ScrollThumb /></ScrollTrack>
    </Shell>
  );
}
